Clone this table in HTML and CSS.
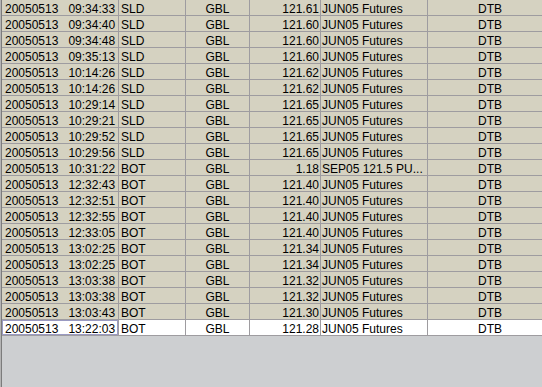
FILE: index.html
```html
<!DOCTYPE html>
<html>
<head>
<meta charset="utf-8">
<link rel="stylesheet" href="styles.css">
</head>
<body>
<div class="panel">
  <div class="grid">
    <div class="row"><div class="c c1">20050513   09:34:33</div><div class="c c2">SLD</div><div class="c c3">GBL</div><div class="c c4">121.61</div><div class="c c5">JUN05 Futures</div><div class="c c6">DTB</div></div>
    <div class="row"><div class="c c1">20050513   09:34:40</div><div class="c c2">SLD</div><div class="c c3">GBL</div><div class="c c4">121.60</div><div class="c c5">JUN05 Futures</div><div class="c c6">DTB</div></div>
    <div class="row"><div class="c c1">20050513   09:34:48</div><div class="c c2">SLD</div><div class="c c3">GBL</div><div class="c c4">121.60</div><div class="c c5">JUN05 Futures</div><div class="c c6">DTB</div></div>
    <div class="row"><div class="c c1">20050513   09:35:13</div><div class="c c2">SLD</div><div class="c c3">GBL</div><div class="c c4">121.60</div><div class="c c5">JUN05 Futures</div><div class="c c6">DTB</div></div>
    <div class="row"><div class="c c1">20050513   10:14:26</div><div class="c c2">SLD</div><div class="c c3">GBL</div><div class="c c4">121.62</div><div class="c c5">JUN05 Futures</div><div class="c c6">DTB</div></div>
    <div class="row"><div class="c c1">20050513   10:14:26</div><div class="c c2">SLD</div><div class="c c3">GBL</div><div class="c c4">121.62</div><div class="c c5">JUN05 Futures</div><div class="c c6">DTB</div></div>
    <div class="row"><div class="c c1">20050513   10:29:14</div><div class="c c2">SLD</div><div class="c c3">GBL</div><div class="c c4">121.65</div><div class="c c5">JUN05 Futures</div><div class="c c6">DTB</div></div>
    <div class="row"><div class="c c1">20050513   10:29:21</div><div class="c c2">SLD</div><div class="c c3">GBL</div><div class="c c4">121.65</div><div class="c c5">JUN05 Futures</div><div class="c c6">DTB</div></div>
    <div class="row"><div class="c c1">20050513   10:29:52</div><div class="c c2">SLD</div><div class="c c3">GBL</div><div class="c c4">121.65</div><div class="c c5">JUN05 Futures</div><div class="c c6">DTB</div></div>
    <div class="row"><div class="c c1">20050513   10:29:56</div><div class="c c2">SLD</div><div class="c c3">GBL</div><div class="c c4">121.65</div><div class="c c5">JUN05 Futures</div><div class="c c6">DTB</div></div>
    <div class="row"><div class="c c1">20050513   10:31:22</div><div class="c c2">BOT</div><div class="c c3">GBL</div><div class="c c4">1.18</div><div class="c c5">SEP05 121.5 PU...</div><div class="c c6">DTB</div></div>
    <div class="row"><div class="c c1">20050513   12:32:43</div><div class="c c2">BOT</div><div class="c c3">GBL</div><div class="c c4">121.40</div><div class="c c5">JUN05 Futures</div><div class="c c6">DTB</div></div>
    <div class="row"><div class="c c1">20050513   12:32:51</div><div class="c c2">BOT</div><div class="c c3">GBL</div><div class="c c4">121.40</div><div class="c c5">JUN05 Futures</div><div class="c c6">DTB</div></div>
    <div class="row"><div class="c c1">20050513   12:32:55</div><div class="c c2">BOT</div><div class="c c3">GBL</div><div class="c c4">121.40</div><div class="c c5">JUN05 Futures</div><div class="c c6">DTB</div></div>
    <div class="row"><div class="c c1">20050513   12:33:05</div><div class="c c2">BOT</div><div class="c c3">GBL</div><div class="c c4">121.40</div><div class="c c5">JUN05 Futures</div><div class="c c6">DTB</div></div>
    <div class="row"><div class="c c1">20050513   13:02:25</div><div class="c c2">BOT</div><div class="c c3">GBL</div><div class="c c4">121.34</div><div class="c c5">JUN05 Futures</div><div class="c c6">DTB</div></div>
    <div class="row"><div class="c c1">20050513   13:02:25</div><div class="c c2">BOT</div><div class="c c3">GBL</div><div class="c c4">121.34</div><div class="c c5">JUN05 Futures</div><div class="c c6">DTB</div></div>
    <div class="row"><div class="c c1">20050513   13:03:38</div><div class="c c2">BOT</div><div class="c c3">GBL</div><div class="c c4">121.32</div><div class="c c5">JUN05 Futures</div><div class="c c6">DTB</div></div>
    <div class="row"><div class="c c1">20050513   13:03:38</div><div class="c c2">BOT</div><div class="c c3">GBL</div><div class="c c4">121.32</div><div class="c c5">JUN05 Futures</div><div class="c c6">DTB</div></div>
    <div class="row"><div class="c c1">20050513   13:03:43</div><div class="c c2">BOT</div><div class="c c3">GBL</div><div class="c c4">121.30</div><div class="c c5">JUN05 Futures</div><div class="c c6">DTB</div></div>
    <div class="row sel"><div class="c c1 focus">20050513   13:22:03</div><div class="c c2">BOT</div><div class="c c3">GBL</div><div class="c c4">121.28</div><div class="c c5">JUN05 Futures</div><div class="c c6">DTB</div></div>
  </div>
</div>
</body>
</html>
```
FILE: styles.css
```css
html, body {
  margin: 0;
  padding: 0;
  width: 542px;
  height: 387px;
  overflow: hidden;
  background: #cdcfd1;
}
.panel {
  height: 387px;
  border-left: 1px solid #b4b4b4;
  box-sizing: border-box;
}
.grid {
  border-left: 1px solid #7c7c7c;
  height: 387px;
  box-sizing: border-box;
  overflow: hidden;
}
.row {
  display: flex;
  height: 16px;
  background: #d5d2c1;
}
.row.sel {
  background: #ffffff;
}
.c {
  box-sizing: border-box;
  height: 16px;
  border-right: 1px solid #9e9ca0;
  border-bottom: 1px solid #9e9ca0;
  font-family: "Liberation Sans", Arial, sans-serif;
  font-size: 12px;
  line-height: 15px;
  padding-top: 2px;
  color: #000;
  white-space: pre;
  overflow: hidden;
  flex: none;
}
.c1 { width: 117px; padding-left: 3px; }
.c2 { width: 67px; padding-left: 2px; }
.c3 { width: 64px; text-align: center; }
.c4 { width: 71px; text-align: right; padding-right: 1px; }
.c5 { width: 107px; padding-left: 1px; }
.c6 { width: 125px; text-align: center; }
.focus {
  box-shadow: inset 0 0 0 1px #9a9ac2;
}
```
